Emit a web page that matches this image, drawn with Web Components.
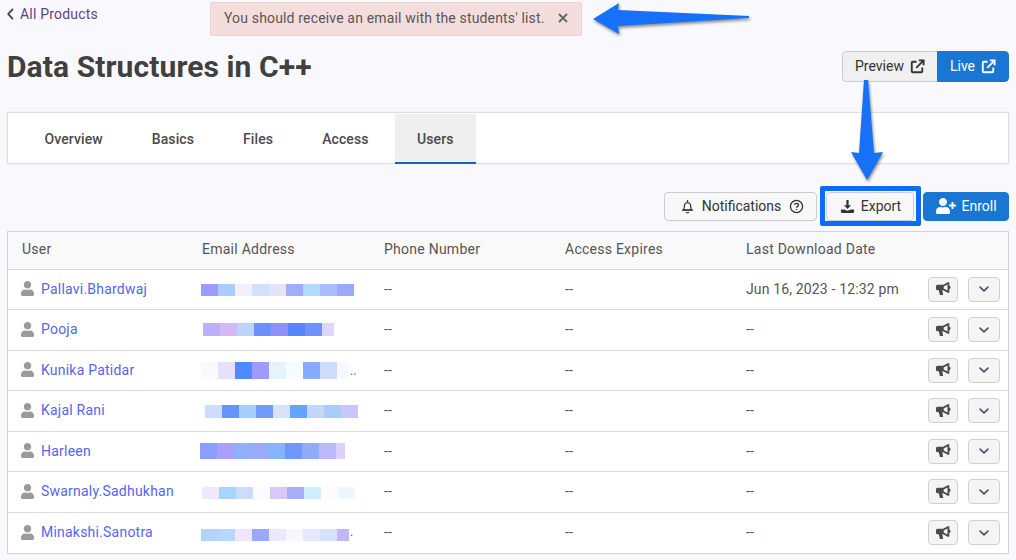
<!DOCTYPE html>
<html>
<head>
<meta charset="utf-8">
<title>Data Structures in C++</title>
<style>
  html, body { margin: 0; background: #f8f8fd; }
  body { font: 14px Roboto, "Liberation Sans", sans-serif; color: #444; }
</style>
</head>
<body>
<app-page>
  <top-bar>
    <back-link slot="back">All Products</back-link>
    <alert-bar slot="alert">You should receive an email with the students' list.</alert-bar>
  </top-bar>
  <page-head>
    <span slot="title">Data Structures in C++</span>
    <btn-group slot="actions">
      <ui-btn icon="ext" kind="grey">Preview</ui-btn>
      <ui-btn icon="ext" kind="blue">Live</ui-btn>
    </btn-group>
  </page-head>
  <tab-nav>
    <tab-item>Overview</tab-item>
    <tab-item>Basics</tab-item>
    <tab-item>Files</tab-item>
    <tab-item>Access</tab-item>
    <tab-item active>Users</tab-item>
  </tab-nav>
  <tool-bar>
    <ui-btn icon="bell" after="help" kind="plain" style="width:153px">Notifications</ui-btn>
    <ui-btn icon="download" kind="plain" style="width:88px" marked>Export</ui-btn>
    <ui-btn icon="userplus" kind="blue" style="width:86px;border-radius:4px">Enroll</ui-btn>
  </tool-bar>
  <user-table>
    <user-row head></user-row>
    <user-row name="Pallavi.Bhardwaj" date="Jun 16, 2023 - 12:32 pm" x="-1" y="1" h="12" cells="#9d9cfb,#abcdfb,#f3f1fd,#d3e0fb,#e3e4fb,#a0aefa,#b3d9fd,#a9bcfc,#9ba9fb"></user-row>
    <user-row name="Pooja" x="1" y="0" h="13" last="12" cells="#bdb0fb,#d3b9f9,#bcd4fb,#6b8ffb,#8f91fb,#5585fd,#7090fb,#e0d5fc"></user-row>
    <user-row name="Kunika Patidar" x="-1" y="1" h="17" last="12" tail=".." cells="#fbf9fe,#e5e0fc,#4e8bfe,#9c9cfb,#e5f3fe,#f6fcfe,#84aefc,#cfdcfd,#f6f9fe"></user-row>
    <user-row name="Kajal Rani" x="3" y="1" h="13" cells="#d0dcfb,#6494fd,#a5cefd,#709cfb,#d9e2fc,#63a4fe,#c4d7fb,#abcbfd,#cac6fc"></user-row>
    <user-row name="Harleen" x="-2" y="0" h="16" last="9" cells="#8c9efb,#a8a0fb,#8fb0fb,#9aaafa,#85b4fc,#6c98fd,#92aafa,#bdb8fb,#ddd0fb"></user-row>
    <user-row name="Swarnaly.Sadhukhan" x="0" y="2" h="12" cells="#f0e9fc,#a9d4fe,#cbdcfd,#fbfbfe,#d6c8f9,#a9aefb,#d0effd,#fcfcfe,#eef7fe"></user-row>
    <user-row name="Minakshi.Sanotra" x="-1" y="3" h="12" last="12" tail="." cells="#b3d4fd,#b7d7fc,#efe6fb,#98a9fa,#ebe8fc,#faf6fe,#e3e8fc,#d5e2fc,#c1b6f8"></user-row>
  </user-table>
</app-page>
<call-out></call-out>

<script>
// font awesome shapes + a few hand drawn ones
const ICONS = {
  ext: `<svg viewBox="0 0 16 16" fill="none" stroke="currentColor" stroke-width="2"><path d="M7 2.900H2.900a1 1 0 0 0-1 1v9.200a1 1 0 0 0 1 1h9.200a1 1 0 0 0 1-1V9"/><path d="M6.600 9.400L14 2M9.400 1.500h5.100v5.100"/></svg>`,
  bell: `<svg viewBox="0 0 16 16" fill="none" stroke="currentColor" stroke-width="1.300"><path d="M3.600 11.600c.7-1 1.100-2 1.100-4.200 0-1.900 1.400-3.400 3.300-3.400s3.300 1.500 3.300 3.400c0 2.200.4 3.200 1.100 4.200z" stroke-linejoin="round"/><path d="M2.600 11.900h10.800" stroke-linecap="round"/><path d="M8 1.200v2.400" stroke-width="1.500"/><path d="M6.500 13.700a1.600 1.600 0 0 0 3 0" stroke-width="1.200"/></svg>`,
  help: `<svg viewBox="0 0 16 16" fill="none" stroke="currentColor" stroke-width="1.400"><circle cx="8" cy="8" r="6.500"/><path d="M5.900 6.300c.2-1.100 1-1.600 2.100-1.600s2.100.6 2.100 1.700c0 1.500-2.100 1.500-2.100 3"/><circle cx="8" cy="11.300" r=".8" fill="currentColor" stroke="none"/></svg>`,
  download: `<svg viewBox="0 0 16 16" fill="currentColor"><path d="M6.800 1h2.400v5.700h2.600L8 10.700 4.200 6.700h2.600z"/><path d="M1 11.300h3.200L8 12.600l3.800-1.300H15v2.200a1.500 1.500 0 0 1-1.500 1.500h-11A1.500 1.500 0 0 1 1 13.500z"/></svg>`,
  userplus: `<svg viewBox="0 0 640 512" fill="currentColor"><path d="M624 208h-64v-64c0-8.800-7.200-16-16-16h-32c-8.800 0-16 7.200-16 16v64h-64c-8.800 0-16 7.200-16 16v32c0 8.800 7.200 16 16 16h64v64c0 8.800 7.200 16 16 16h32c8.800 0 16-7.200 16-16v-64h64c8.800 0 16-7.200 16-16v-32c0-8.800-7.200-16-16-16zm-400 48c70.700 0 128-57.300 128-128S294.700 0 224 0 96 57.300 96 128s57.300 128 128 128zm89.600 32h-16.700c-22.200 10.200-46.900 16-72.900 16s-50.600-5.800-72.900-16h-16.700C60.200 288 0 348.200 0 422.400V464c0 26.500 21.500 48 48 48h352c26.500 0 48-21.500 48-48v-41.600c0-74.200-60.200-134.400-134.400-134.400z"/></svg>`,
  user: `<svg viewBox="0 0 448 512" fill="currentColor"><path d="M224 256c70.700 0 128-57.300 128-128S294.700 0 224 0 96 57.300 96 128s57.300 128 128 128zm89.600 32h-16.700c-22.200 10.200-46.900 16-72.900 16s-50.600-5.800-72.900-16h-16.700C60.200 288 0 348.200 0 422.400V464c0 26.500 21.500 48 48 48h352c26.500 0 48-21.500 48-48v-41.600c0-74.200-60.200-134.400-134.400-134.400z"/></svg>`,
  horn: `<svg viewBox="0 0 16 16" fill="currentColor"><path fill-rule="evenodd" d="M12.700 1.200h1.600v3.300a1.900 1.900 0 0 1 0 3.600v3.700h-1.600L8.200 9.300H7.300l.9 4.600H4.900L3.800 9.300H2.500A1.500 1.500 0 0 1 1 7.800V5.300a1.500 1.500 0 0 1 1.500-1.500h5.700zM12.500 3.600L8.700 5.500v2.100l3.800 1.900z"/></svg>`,
  chevron: `<svg viewBox="0 0 16 16" fill="none" stroke="currentColor" stroke-width="1.800" stroke-linecap="round" stroke-linejoin="round"><path d="M3.500 5.800L8 10.200l4.500-4.400"/></svg>`,
};

function shadow(el, html) {
  el.attachShadow({mode: "open"}).innerHTML = html;
}

class AppPage extends HTMLElement {
  constructor() {
    super();
    shadow(this, `<style>
      :host { display: block; padding: 0 7px; }
    </style><slot></slot>`);
  }
}

class TopBar extends HTMLElement {
  constructor() {
    super();
    shadow(this, `<style>
      :host { display: flex; height: 36px; padding-top: 2px; box-sizing: content-box; }
      #back { display: block; width: 203px; padding-top: 3px; }
    </style><div id="back"><slot name="back"></slot></div><slot name="alert"></slot>`);
  }
}

class BackLink extends HTMLElement {
  constructor() {
    super();
    shadow(this, `<style>
      :host { display: flex; align-items: center; gap: 6px; color: #5f4484; font-size: 14px; line-height: 18px; letter-spacing: .2px; }
      svg { width: 7px; height: 12px; color: #444; }
    </style><svg viewBox="0 0 6 11" fill="none" stroke="currentColor" stroke-width="1.700"><path d="M5.200 .8L1 5.500l4.200 4.700"/></svg><slot></slot>`);
  }
}

class AlertBar extends HTMLElement {
  constructor() {
    super();
    shadow(this, `<style>
      :host { display: flex; align-items: center; box-sizing: border-box; width: 372px; height: 34px; padding: 0 13px 2px; background: #f3dddd; border: 1px solid #efcfcf; border-radius: 2px; color: #5a5556; font-size: 14px; letter-spacing: .16px; white-space: nowrap; }
      svg { flex: none; width: 10px; height: 10px; margin-left: 13px; color: #666; }
    </style><slot></slot><svg viewBox="0 0 10 10" stroke="currentColor" stroke-width="1.800"><path d="M1 1l8 8M9 1l-8 8"/></svg>`);
  }
}

class PageHead extends HTMLElement {
  constructor() {
    super();
    shadow(this, `<style>
      :host { display: flex; justify-content: space-between; align-items: flex-start; height: 61px; padding-top: 13px; color: #404040; }
      #t { font-size: 30px; font-weight: 700; line-height: 34px; margin-top: -1px; letter-spacing: .1px; }
    </style><div id="t"><slot name="title"></slot></div><slot name="actions"></slot>`);
  }
}

class BtnGroup extends HTMLElement {
  constructor() {
    super();
    shadow(this, `<style>
      :host { display: flex; height: 31px; border-radius: 4px; overflow: hidden; }
      ::slotted(ui-btn) { height: 31px; border-radius: 0; }
      ::slotted(ui-btn:first-child) { width: 95px; border-radius: 4px 0 0 4px; border-right: 0; }
      ::slotted(ui-btn:last-child) { width: 72px; border-radius: 0 4px 4px 0; }
    </style><slot></slot>`);
  }
}

class UiBtn extends HTMLElement {
  constructor() {
    super();
    const icon = this.getAttribute("icon");
    const after = this.getAttribute("after");
    shadow(this, `<style>
      :host { display: inline-flex; align-items: center; justify-content: center; gap: 6px; box-sizing: border-box; height: 29px; padding-bottom: 1px; border: 1px solid #ccc; border-radius: 4px; font-size: 14px; color: #333; position: relative; }
      :host([kind=plain]) { background: #f8f8f8; }
      :host([kind=grey]) { background: #f0f0f0; }
      :host([kind=blue]) { background: #1976d2; border-color: #1976d2; color: #fff; }
      svg { display: block; }
      .i { display: block; width: 15px; height: 15px; }
      :host([icon=bell]) { gap: 7px; padding-left: 3px; }
      :host([icon=bell]) .i:first-child { width: 17px; height: 17px; }
      :host([icon=ext]) .i { order: 2; }
      :host([icon=download]) { padding-left: 1px; }
      :host([icon=userplus]) { gap: 5px; padding-left: 1px; }
      :host([icon=userplus]) .i { width: 20px; height: 16px; }
      .a { width: 15px; height: 15px; margin-left: 1px; }
      #mark { display: none; position: absolute; left: -7px; right: -8px; top: -7px; bottom: -6px; border: 5px solid #0b6cf5; border-radius: 2px; pointer-events: none; }
      :host([marked]) #mark { display: block; }
    </style><span class="i">${ICONS[icon]}</span><slot></slot>${after ? `<span class="i a">${ICONS[after]}</span>` : ""}<div id="mark"></div>`);
  }
}

class TabNav extends HTMLElement {
  constructor() {
    super();
    shadow(this, `<style>
      :host { display: flex; height: 52px; box-sizing: border-box; padding: 1px 12px 0 12px; background: #fff; border: 1px solid #dfdfdb; border-radius: 2px; box-shadow: 0 0 1px rgba(0,0,0,.2); }
    </style><slot></slot>`);
  }
}

class TabItem extends HTMLElement {
  constructor() {
    super();
    shadow(this, `<style>
      :host { display: flex; align-items: center; box-sizing: border-box; margin-bottom: -1px; padding: 2px 24.500px 0; font-weight: 500; font-size: 14px; letter-spacing: .1px; color: #4a4a4a; border-bottom: 2px solid transparent; }
      :host([active]) { background: #efefef; border-bottom-color: #1565c0; padding: 2px 22.500px 0; margin-left: 1.500px; }
    </style><slot></slot>`);
  }
}

class ToolBar extends HTMLElement {
  constructor() {
    super();
    shadow(this, `<style>
      :host { display: flex; justify-content: flex-end; gap: 9px; padding: 28px 0 10px; }
    </style><slot></slot>`);
  }
}

class UserTable extends HTMLElement {
  constructor() {
    super();
    shadow(this, `<style>
      :host { display: block; border: 1px solid #d3d3d6; background: #fff; }
    </style><slot></slot>`);
  }
}

class UserRow extends HTMLElement {
  constructor() {
    super();
    const head = this.hasAttribute("head");
    let cols;
    if (head) {
      cols = ["User", "Email Address", "Phone Number", "Access Expires", "Last Download Date"].map(t => `<div class="c">${t}</div>`).join("") + `<div></div>`;
    } else {
      const attr = n => this.getAttribute(n);
      const cells = attr("cells").split(",");
      const patch = cells.map((col, i) => `<i style="background:${col};width:${i == cells.length - 1 && attr("last") ? attr("last") : 17}px"></i>`).join("");
      cols = `<div class="c n"><span class="u">${ICONS.user}</span><span>${attr("name")}</span></div>
        <div class="c"><blur-patch style="margin-left:${attr("x")}px;top:${attr("y")}px;height:${attr("h")}px">${patch}</blur-patch>${attr("tail") ? `<span class="tail">${attr("tail")}</span>` : ""}</div>
        <div class="c">--</div><div class="c">--</div>
        <div class="c">${attr("date") || "--"}</div>
        <div class="acts"><span class="b horn">${ICONS.horn}</span><span class="b chev">${ICONS.chevron}</span></div>`;
    }
    shadow(this, `<style>
      :host { display: grid; grid-template-columns: 180px 182px 181px 181px 181px 1fr; align-items: center; height: 40.500px; box-sizing: border-box; border-bottom: 1px solid #dadada; color: #555; font-size: 14px; }
      :host([head]) { height: 37.750px; background: #f9f9f9; border-bottom: 1px solid #d8d8d8; }
      :host([head]) .c { letter-spacing: .25px; padding-bottom: 3px; }
      :host(:last-child) { border-bottom: 0; }
      .c { padding-left: 14px; padding-bottom: 2px; display: flex; align-items: center; letter-spacing: .15px; white-space: nowrap; }
      .n { color: #5566ee; gap: 7px; letter-spacing: .22px; padding-left: 13px; }
      .u { width: 13px; height: 15px; color: #9a9a9a; }
      svg { display: block; width: 100%; height: 100%; }
      .tail { color: #556; margin-left: 1px; align-self: flex-end; font-size: 12px; }
      .acts { display: flex; justify-content: flex-end; gap: 10px; padding-right: 8px; padding-bottom: 1px; }
      .b { box-sizing: border-box; height: 25px; display: flex; align-items: center; justify-content: center; border: 1px solid #d0d0d0; border-radius: 4px; background: #f4f4f5; }
      .horn { width: 30px; color: #4a4a4a; }
      .horn svg { width: 16px; height: 16px; }
      .chev { width: 32px; color: #445566; }
      .chev svg { width: 14px; height: 14px; }
    </style>${cols}`);
  }
}

class BlurPatch extends HTMLElement {
  constructor() {
    super();
    shadow(this, `<style>
      :host { display: flex; position: relative; }
      ::slotted(i) { display: block; height: 100%; }
    </style><slot></slot>`);
  }
}

// the two blue annotation arrows drawn over the page
class CallOut extends HTMLElement {
  constructor() {
    super();
    shadow(this, `<style>
      :host { position: absolute; left: 0; top: 0; width: 1016px; height: 560px; pointer-events: none; }
      svg { display: block; filter: drop-shadow(1px 2px 1.500px rgba(0,0,0,.45)); }
    </style><svg width="1016" height="560" fill="#1670f8">
      <path d="M593 19L619 3l-1 7 131 6v2L618 26l1 8z"/>
      <path d="M864 80h4l6 73 9-1-16 28-16-28 8 1z"/>
    </svg>`);
  }
}

customElements.define("app-page", AppPage);
customElements.define("top-bar", TopBar);
customElements.define("back-link", BackLink);
customElements.define("alert-bar", AlertBar);
customElements.define("page-head", PageHead);
customElements.define("btn-group", BtnGroup);
customElements.define("ui-btn", UiBtn);
customElements.define("tab-nav", TabNav);
customElements.define("tab-item", TabItem);
customElements.define("tool-bar", ToolBar);
customElements.define("user-table", UserTable);
customElements.define("blur-patch", BlurPatch);
customElements.define("user-row", UserRow);
customElements.define("call-out", CallOut);
</script>
</body>
</html>
